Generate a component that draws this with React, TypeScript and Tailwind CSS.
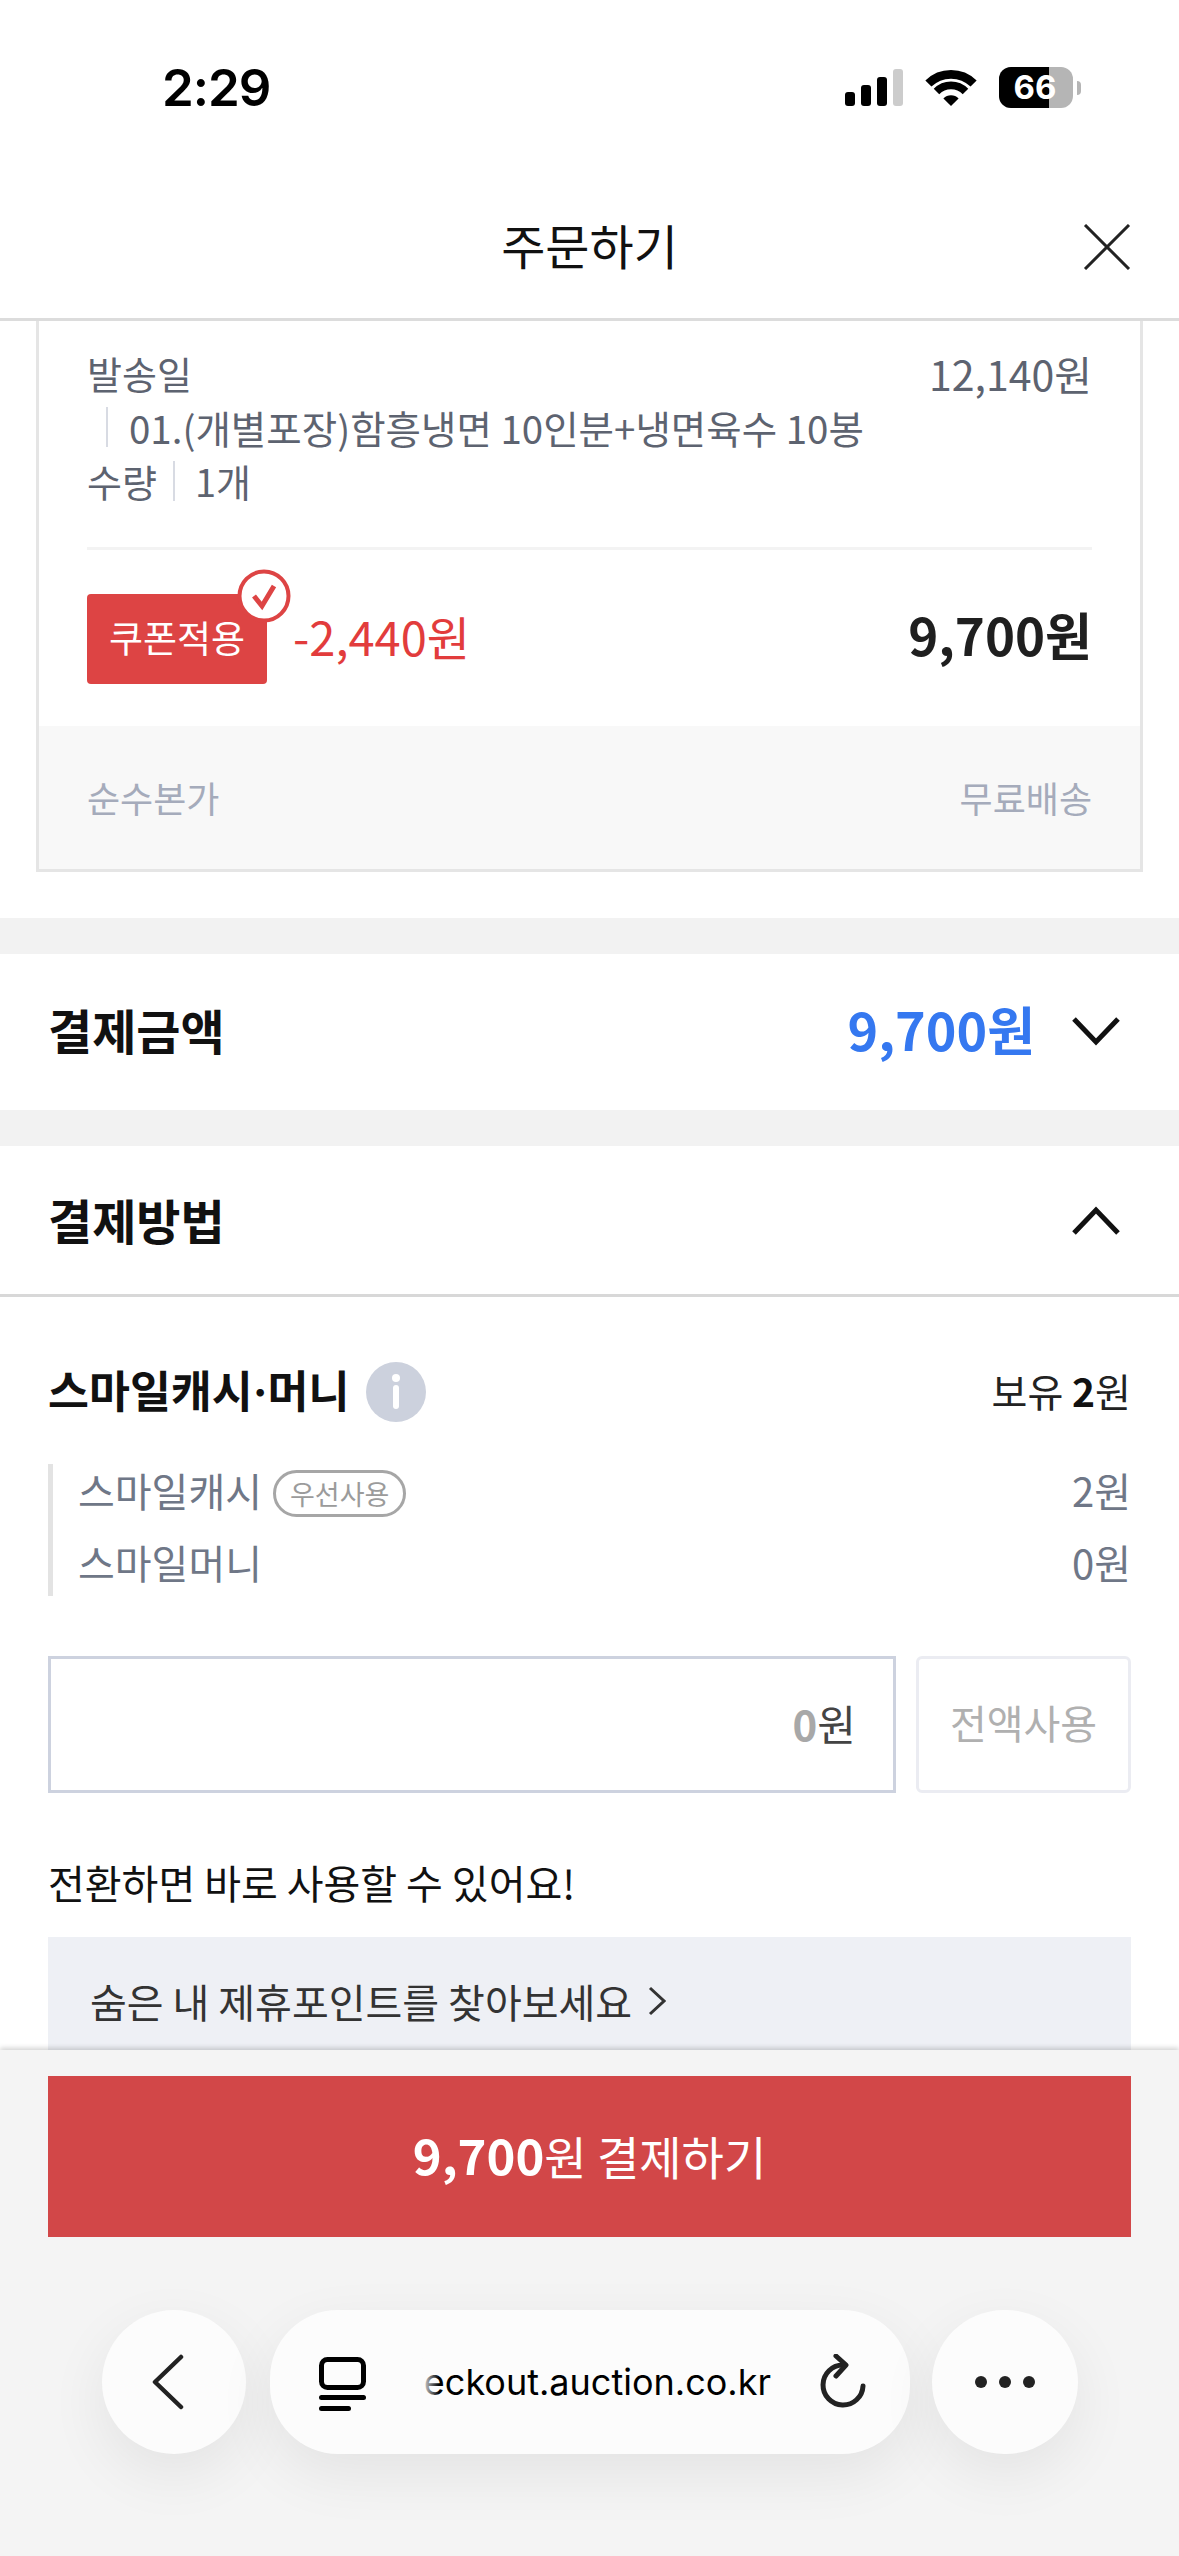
const StatusBar = () => (
  <div className="h-[175px] relative font-['Inter',sans-serif]">
    <div className="flex items-start justify-between pl-[162px] pr-[98px] pt-[58px]">
      <span className="text-[51px] leading-[60px] font-semibold text-black tracking-[-1px]">2:29</span>
      <div className="flex items-start pt-[9px]">
        <svg width="58" height="38" viewBox="0 0 58 38" className="mt-[2px]">
          <rect x="0" y="23" width="10" height="14" rx="3" fill="#000" />
          <rect x="16" y="16" width="10" height="21" rx="3" fill="#000" />
          <rect x="32" y="8" width="10" height="29" rx="3" fill="#000" />
          <rect x="48" y="0" width="10" height="37" rx="3" fill="#ccc" />
        </svg>
        <svg width="52" height="38" viewBox="0 0 52 38" className="ml-[22px] mt-[2px]">
          <path d="M3.4 14.5 A32.3 32.3 0 0 1 48.6 14.5" fill="none" stroke="#000" strokeWidth="8.7" />
          <path d="M11.5 22.5 A20.2 20.2 0 0 1 40.5 22.5" fill="none" stroke="#000" strokeWidth="7.7" />
          <path d="M18.4 29.4 A10.7 10.7 0 0 1 33.6 29.4 L26 37 Z" fill="#000" />
        </svg>
        <div className="ml-[22px] flex items-center">
          <div className="relative w-[74px] h-[41px] rounded-[12px] bg-[#b5b5b5] overflow-hidden flex items-center justify-center">
            <div className="absolute left-0 top-0 bottom-0 w-[50px] bg-black" />
            <span className="relative text-[33px] leading-none font-bold text-white -ml-[2px]">66</span>
          </div>
          <div className="w-[4px] h-[14px] ml-[4px] rounded-r-full bg-[#b5b5b5]" />
        </div>
      </div>
    </div>
  </div>
);

const Header = () => (
  <div className="h-[146px] grid grid-cols-[1fr_auto_1fr] items-center border-b-[3px] border-[#dcdcdc] bg-white">
    <div />
    <h1 className="pb-[5px] text-[48px] leading-none font-normal text-[#111]">주문하기</h1>
    <div className="flex justify-end pr-[48px]">
      <svg width="48" height="46" viewBox="0 0 48 46" fill="none" stroke="#222" strokeWidth="3">
        <path d="M2 1 L46 45 M46 1 L2 45" />
      </svg>
    </div>
  </div>
);

const OrderCard = () => (
  <div className="mx-[36px] border-x-[3px] border-b-[3px] border-[#e5e5e5]">
    <div className="px-[48px] pt-[25px]">
      <div className="flex justify-between text-[38px] leading-[54px] text-[#5d6370]">
        <span>발송일</span>
        <span className="text-[41px]">12,140원</span>
      </div>
      <div className="flex items-center text-[38.5px] leading-[54px] text-[#5d6370]">
        <span className="w-[2px] h-[40px] ml-[19px] mr-[21px] bg-[#d8dbe3]" />
        <span>01.(개별포장)함흥냉면 10인분+냉면육수 10봉</span>
      </div>
      <div className="flex items-center text-[38px] leading-[54px] text-[#5d6370]">
        <span>수량</span>
        <span className="w-[2px] h-[40px] ml-[16px] mr-[20px] bg-[#d8dbe3]" />
        <span>1개</span>
      </div>
      <div className="h-[3px] mt-[39px] bg-[#f3f3f3]" />
      <div className="flex items-center justify-between mt-[44px] mb-[42px]">
        <div className="flex items-center gap-[26px]">
          <div className="relative w-[180px] h-[90px] rounded-[4px] pb-[2px] bg-[#dd4444] flex items-center justify-center text-[37px] text-white">
            쿠폰적용
            <svg width="54" height="54" viewBox="0 0 54 54" className="absolute -top-[25px] -right-[24px]">
              <circle cx="27" cy="27" r="24.5" fill="#fff" stroke="#dd4444" strokeWidth="4" />
              <path d="M17 27 L25 37 L37 17" fill="none" stroke="#dd4444" strokeWidth="5" />
            </svg>
          </div>
          <span className="pb-[8px] text-[47px] leading-none text-[#e23c3c]">-2,440원</span>
        </div>
        <span className="pb-[10px] text-[51px] leading-none font-bold text-[#1f1f1f]">9,700원</span>
      </div>
    </div>
    <div className="h-[143px] px-[48px] pb-[2px] flex items-center justify-between bg-[#f8f8f8] text-[36px] text-[#a5abbb]">
      <span>순수본가</span>
      <span>무료배송</span>
    </div>
  </div>
);

const Chevron = ({ up }: { up?: boolean }) => (
  <svg width="50" height="30" viewBox="0 0 50 30" fill="none" stroke="#111" strokeWidth="5">
    <path d={up ? "M3 28 L25 5 L47 28" : "M3 2 L25 25 L47 2"} />
  </svg>
);

const SmilePay = () => (
  <div className="px-[48px] pt-[65px]">
    <div className="h-[60px] flex items-center justify-between">
      <div className="flex items-center gap-[17px]">
        <span className="pb-[4px] text-[44.5px] leading-[56px] font-bold text-[#111]">
          스마일캐시<span className="font-['Inter']">·</span>머니
        </span>
        <svg width="60" height="60" viewBox="0 0 60 60">
          <circle cx="30" cy="30" r="30" fill="#ccd1dd" />
          <circle cx="30" cy="16" r="4" fill="#fff" />
          <rect x="27" y="23" width="6" height="24" rx="3" fill="#fff" />
        </svg>
      </div>
      <span className="pb-[4px] text-[39px] leading-[50px] text-[#222]">보유 <b className="font-bold text-[#111]">2</b>원</span>
    </div>
    <div className="flex flex-col gap-[14px] mt-[42px] pb-[2px] pl-[25px] border-l-[5px] border-[#e3e3e3] text-[40px] leading-[52px] text-[#6f7787]">
      <div className="h-[58px] flex items-start justify-between">
        <div className="flex items-start gap-[11px]">
          <span>스마일캐시</span>
          <span className="h-[47px] mt-[6px] px-[14px] flex items-center rounded-full border-[3px] border-[#a6a6a6] text-[27px] leading-none text-[#9b9b9b]">우선사용</span>
        </div>
        <span>2원</span>
      </div>
      <div className="h-[58px] flex items-start justify-between">
        <span>스마일머니</span>
        <span>0원</span>
      </div>
    </div>
    <div className="flex gap-[20px] mt-[60px] h-[137px]">
      <div className="flex-1 flex items-center justify-end pr-[37px] pb-[4px] border-[3px] border-[#cdd2df] text-[42px]">
        <b className="font-bold text-[#a8a8a8]">0</b>
        <span className="text-[#444]">원</span>
      </div>
      <div className="w-[215px] flex items-center justify-center pb-[5px] rounded-[6px] border-[3px] border-[#ebecf2] text-[40px] text-[#b0b0b0]">전액사용</div>
    </div>
    <p className="mt-[62px] text-[40px] leading-[54px] text-[#111]">전환하면 바로 사용할 수 있어요!</p>
    <div className="mt-[28px] h-[130px] px-[42px] pb-[2px] flex items-center gap-[16px] bg-[#eef0f5] text-[40px] text-[#333]">
      <span>숨은 내 제휴포인트를 찾아보세요</span>
      <svg width="18" height="30" viewBox="0 0 18 30" fill="none" stroke="#333" strokeWidth="3">
        <path d="M2 2 L16 15 L2 28" />
      </svg>
    </div>
  </div>
);

const BrowserBar = () => (
  <div className="flex gap-[22px] pl-[102px] pr-[101px] mt-[73px] h-[144px] font-['Inter',sans-serif]">
    <div className="w-[144px] mr-[2px] shrink-0 rounded-full bg-[#fcfcfc] shadow-[0_20px_60px_rgba(0,0,0,0.07)] flex items-center justify-center">
      <svg width="34" height="56" viewBox="0 0 34 56" fill="none" stroke="#222" strokeWidth="4.5" strokeLinecap="round" strokeLinejoin="round" className="-ml-[12px]">
        <path d="M30 3 L4 28 L30 53" />
      </svg>
    </div>
    <div className="flex-1 rounded-[68px] bg-[#fcfcfc] shadow-[0_20px_60px_rgba(0,0,0,0.07)] flex items-center pl-[49px] pr-[44px]">
      <svg width="47" height="54" viewBox="0 0 47 54" className="shrink-0 mt-[4px]">
        <rect x="2.5" y="2.5" width="42" height="28" rx="6" fill="none" stroke="#000" strokeWidth="5" />
        <rect x="0" y="38" width="47" height="5" rx="2.5" fill="#000" />
        <rect x="0" y="49" width="32" height="5" rx="2.5" fill="#000" />
      </svg>
      <div className="relative w-[358px] ml-[47px] overflow-hidden flex justify-end">
        <span className="shrink-0 whitespace-nowrap text-[36px] leading-[50px] text-black">checkout.auction.co.kr</span>
        <div className="absolute left-0 top-0 bottom-0 w-[26px] bg-gradient-to-r from-[#fcfcfc] from-30% to-transparent" />
      </div>
      <svg width="48" height="56" viewBox="0 0 48 56" fill="none" stroke="#222" strokeWidth="5" strokeLinecap="round" strokeLinejoin="round" className="shrink-0 ml-[47px]">
        <path d="M25 11 A20 20 0 1 0 45 32" />
        <path d="M18 2 L28 11 L18 22" />
      </svg>
    </div>
    <div className="w-[146px] shrink-0 rounded-full bg-[#fcfcfc] shadow-[0_20px_60px_rgba(0,0,0,0.07)] flex items-center justify-center gap-[12px]">
      <span className="w-[12px] h-[12px] rounded-full bg-[#222]" />
      <span className="w-[12px] h-[12px] rounded-full bg-[#222]" />
      <span className="w-[12px] h-[12px] rounded-full bg-[#222]" />
    </div>
  </div>
);

export default function App() {
  return (
    <div className="w-[1179px] h-[2556px] flex flex-col overflow-hidden bg-white font-['Noto_Sans_CJK_KR','Noto_Sans',sans-serif]">
      <StatusBar />
      <Header />
      <div className="flex-1 min-h-0 overflow-hidden">
        <OrderCard />
        <div className="h-[46px]" />
        <div className="h-[36px] bg-[#f2f2f2]" />
        <div className="h-[156px] pl-[48px] pr-[58px] flex items-center justify-between">
          <span className="pb-[6px] text-[48px] font-bold text-[#111]">결제금액</span>
          <div className="flex items-center gap-[36px]">
            <span className="pb-[6px] text-[52px] font-bold text-[#3578f0]">9,700원</span>
            <Chevron />
          </div>
        </div>
        <div className="h-[36px] bg-[#f2f2f2]" />
        <div className="h-[151px] pl-[48px] pr-[58px] flex items-center justify-between border-b-[3px] border-[#d8d8d8]">
          <span className="pb-[3px] text-[48px] font-bold text-[#111]">결제방법</span>
          <Chevron up />
        </div>
        <SmilePay />
      </div>
      <div className="h-[506px] shrink-0 bg-[#f4f4f4] shadow-[0_-2px_5px_rgba(0,0,0,0.18)] relative pt-[26px]">
        <div className="mx-[48px] h-[161px] pb-[2px] flex items-baseline justify-center bg-[#d24748] text-[46px] leading-[155px] text-white">
          <b className="text-[49px] font-bold">9,700</b>원 결제하기
        </div>
        <BrowserBar />
      </div>
    </div>
  );
}
